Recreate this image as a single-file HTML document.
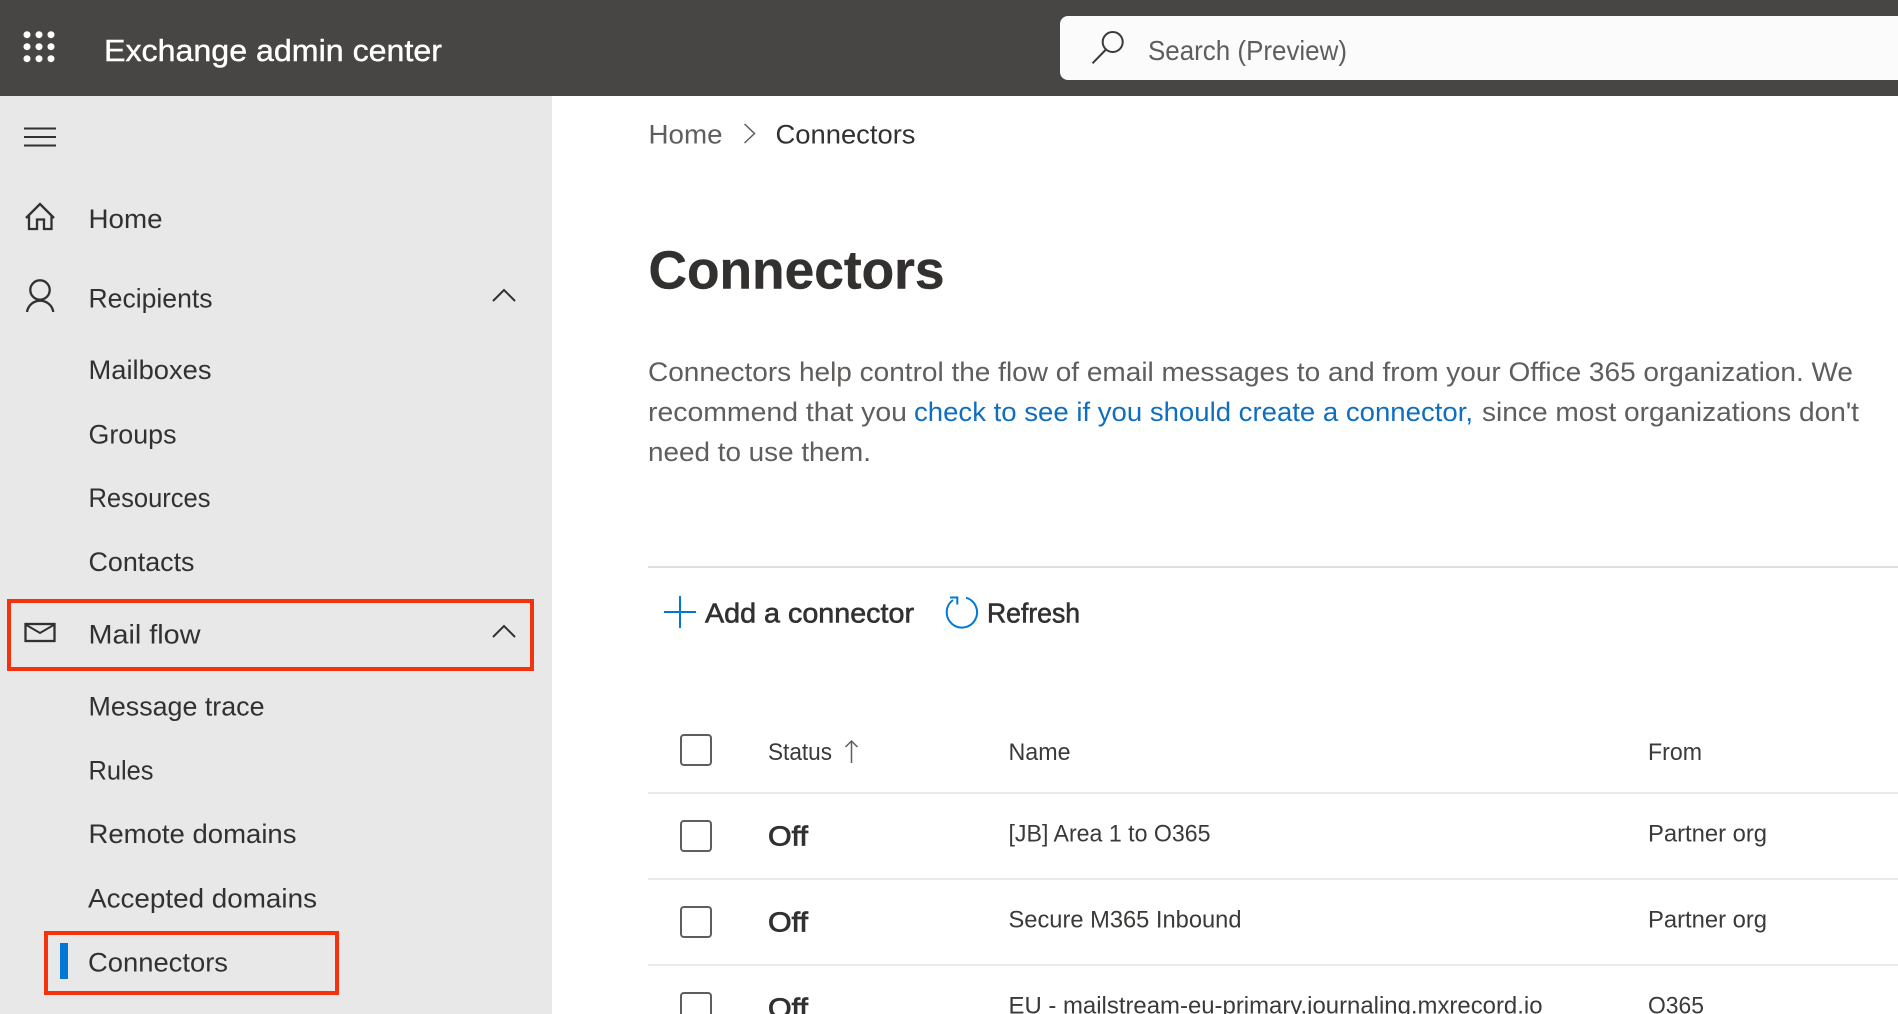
<!DOCTYPE html>
<html lang="en">
<head>
<meta charset="utf-8">
<title>Connectors - Exchange admin center</title>
<style>
html,body{margin:0;padding:0;width:1898px;height:1014px;overflow:hidden;background:#fff}
svg{display:block;filter:blur(.3px)}
text{font-family:"Liberation Sans",sans-serif;white-space:pre}
.nav{font-size:27px;fill:#323130}
.p{font-size:26.5px;fill:#605e5c}
.t{font-size:24px;fill:#3b3a39}
.s{font-size:28px;fill:#323130;stroke:#323130;stroke-width:.6px}
.off{font-size:28px;fill:#323130;stroke:#323130;stroke-width:.8px}
</style>
</head>
<body>
<svg width="1898" height="1014" viewBox="0 0 1898 1014" xmlns="http://www.w3.org/2000/svg">
  <rect width="1898" height="1014" fill="#fff"/>
  <!-- header -->
  <rect width="1898" height="96" fill="#484644"/>
  <g fill="#fff">
    <circle cx="27" cy="34.7" r="3.5"/><circle cx="39" cy="34.7" r="3.5"/><circle cx="51" cy="34.7" r="3.5"/>
    <circle cx="27" cy="46.7" r="3.5"/><circle cx="39" cy="46.7" r="3.5"/><circle cx="51" cy="46.7" r="3.5"/>
    <circle cx="27" cy="58.7" r="3.5"/><circle cx="39" cy="58.7" r="3.5"/><circle cx="51" cy="58.7" r="3.5"/>
  </g>
  <text x="104" y="61" font-size="31" fill="#fff" stroke="#fff" stroke-width=".4" textLength="338" lengthAdjust="spacingAndGlyphs">Exchange admin center</text>
  <path d="M1068 16H1898V80H1068a8 8 0 0 1-8-8V24a8 8 0 0 1 8-8z" fill="#fbfbfb"/>
  <circle cx="1112.700" cy="42" r="10" fill="none" stroke="#3b3a39" stroke-width="2"/>
  <path d="M1105.500 50L1092.500 63.300" fill="none" stroke="#3b3a39" stroke-width="2"/>
  <text x="1148" y="60" font-size="28" fill="#605e5c" textLength="199" lengthAdjust="spacingAndGlyphs">Search (Preview)</text>

  <!-- sidebar -->
  <rect y="96" width="552" height="918" fill="#e8e8e8"/>
  <path d="M24 128.500H56M24 137H56M24 145.500H56" stroke="#323130" stroke-width="2" fill="none"/>
  <path d="M26 218L40 204L54 218M29 215.500V229H37V219.500H44V229H51.500V215.500" fill="none" stroke="#323130" stroke-width="2.300"/>
  <text class="nav" x="88.500" y="228" textLength="74" lengthAdjust="spacingAndGlyphs">Home</text>
  <circle cx="40" cy="290" r="9.700" fill="none" stroke="#323130" stroke-width="2.300"/>
  <path d="M27 312A13.300 13.300 0 0 1 53.300 312" fill="none" stroke="#323130" stroke-width="2.300"/>
  <text class="nav" x="88.500" y="307.700" textLength="124" lengthAdjust="spacingAndGlyphs">Recipients</text>
  <path d="M493 301L504 290L515 301" fill="none" stroke="#323130" stroke-width="2"/>
  <text class="nav" x="88.500" y="379" textLength="123" lengthAdjust="spacingAndGlyphs">Mailboxes</text>
  <text class="nav" x="88.500" y="443.500" textLength="88" lengthAdjust="spacingAndGlyphs">Groups</text>
  <text class="nav" x="88.500" y="507" textLength="122" lengthAdjust="spacingAndGlyphs">Resources</text>
  <text class="nav" x="88.500" y="571" textLength="106" lengthAdjust="spacingAndGlyphs">Contacts</text>
  <rect x="25.500" y="624" width="29" height="17" fill="none" stroke="#323130" stroke-width="2.300"/>
  <path d="M25.500 624.500L40 633L54.500 624.500" fill="none" stroke="#323130" stroke-width="2"/>
  <text class="nav" x="88.500" y="643.300" textLength="112" lengthAdjust="spacingAndGlyphs">Mail flow</text>
  <path d="M493 637L504 626L515 637" fill="none" stroke="#323130" stroke-width="2"/>
  <text class="nav" x="88.500" y="715.700" textLength="176" lengthAdjust="spacingAndGlyphs">Message trace</text>
  <text class="nav" x="88.500" y="779.300" textLength="65" lengthAdjust="spacingAndGlyphs">Rules</text>
  <text class="nav" x="88.500" y="843" textLength="208" lengthAdjust="spacingAndGlyphs">Remote domains</text>
  <text class="nav" x="88" y="907.300" textLength="229" lengthAdjust="spacingAndGlyphs">Accepted domains</text>
  <rect x="60" y="943" width="8" height="36" fill="#0078d4"/>
  <text class="nav" x="88" y="971.500" textLength="140" lengthAdjust="spacingAndGlyphs">Connectors</text>
  <rect x="9" y="601" width="523" height="68" fill="none" stroke="#f2330d" stroke-width="4"/>
  <rect x="46" y="933" width="291" height="60" fill="none" stroke="#f2330d" stroke-width="4"/>

  <!-- breadcrumb -->
  <text x="648.500" y="143.500" font-size="27" fill="#605e5c" textLength="74" lengthAdjust="spacingAndGlyphs">Home</text>
  <path d="M744.500 124L754.500 133.500L744.500 143" fill="none" stroke="#605e5c" stroke-width="1.500"/>
  <text x="775.500" y="143.500" font-size="27" fill="#323130" textLength="140" lengthAdjust="spacingAndGlyphs">Connectors</text>

  <!-- heading -->
  <text x="648.500" y="288.500" font-size="54" font-weight="700" fill="#323130" stroke="#323130" stroke-width=".4" textLength="296" lengthAdjust="spacingAndGlyphs">Connectors</text>

  <!-- description -->
  <text class="p" x="648" y="381" textLength="1205" lengthAdjust="spacingAndGlyphs">Connectors help control the flow of email messages to and from your Office 365 organization. We</text>
  <text class="p" x="648" y="421" textLength="259" lengthAdjust="spacingAndGlyphs">recommend that you</text>
  <text class="p" x="914" y="421" style="fill:#106ebe" textLength="559" lengthAdjust="spacingAndGlyphs">check to see if you should create a connector,</text>
  <text class="p" x="1482" y="421" textLength="377" lengthAdjust="spacingAndGlyphs">since most organizations don't</text>
  <text class="p" x="648" y="461" textLength="223" lengthAdjust="spacingAndGlyphs">need to use them.</text>

  <rect x="648" y="566" width="1250" height="2" fill="#e1dfdd"/>

  <!-- toolbar -->
  <path d="M664 612H696M680 596V628" stroke="#0078d4" stroke-width="2" fill="none"/>
  <text class="s" x="705" y="622.700" textLength="209" lengthAdjust="spacingAndGlyphs">Add a connector</text>
  <path d="M966 597.700A15.200 15.200 0 1 1 953 600" fill="none" stroke="#0078d4" stroke-width="2"/>
  <path d="M950 597.500H957.300V604.500" fill="none" stroke="#0078d4" stroke-width="2"/>
  <text class="s" x="987" y="622.700" textLength="93" lengthAdjust="spacingAndGlyphs">Refresh</text>

  <!-- table header -->
  <rect x="681" y="735" width="30" height="30" rx="3" fill="#fff" stroke="#605e5c" stroke-width="2"/>
  <text class="t" x="768" y="760" textLength="64" lengthAdjust="spacingAndGlyphs">Status</text>
  <path d="M851.500 741V763M845.500 747L851.500 741L857.500 747" fill="none" stroke="#605e5c" stroke-width="1.500"/>
  <text class="t" x="1008.500" y="760" textLength="62" lengthAdjust="spacingAndGlyphs">Name</text>
  <text class="t" x="1648" y="760" textLength="54" lengthAdjust="spacingAndGlyphs">From</text>
  <rect x="648" y="792" width="1250" height="2" fill="#edebe9"/>

  <!-- row 1 -->
  <rect x="681" y="821" width="30" height="30" rx="3" fill="#fff" stroke="#605e5c" stroke-width="2"/>
  <text class="off" x="768" y="845.700" textLength="40" lengthAdjust="spacingAndGlyphs">Off</text>
  <text class="t" x="1008.500" y="841.700" textLength="202" lengthAdjust="spacingAndGlyphs">[JB] Area 1 to O365</text>
  <text class="t" x="1648" y="841.700" textLength="119" lengthAdjust="spacingAndGlyphs">Partner org</text>
  <rect x="648" y="878" width="1250" height="2" fill="#edebe9"/>

  <!-- row 2 -->
  <rect x="681" y="907" width="30" height="30" rx="3" fill="#fff" stroke="#605e5c" stroke-width="2"/>
  <text class="off" x="768" y="931.700" textLength="40" lengthAdjust="spacingAndGlyphs">Off</text>
  <text class="t" x="1008.500" y="927.700" textLength="233" lengthAdjust="spacingAndGlyphs">Secure M365 Inbound</text>
  <text class="t" x="1648" y="927.700" textLength="119" lengthAdjust="spacingAndGlyphs">Partner org</text>
  <rect x="648" y="964" width="1250" height="2" fill="#edebe9"/>

  <!-- row 3 -->
  <rect x="681" y="993" width="30" height="30" rx="3" fill="#fff" stroke="#605e5c" stroke-width="2"/>
  <text class="off" x="768" y="1017.700" textLength="40" lengthAdjust="spacingAndGlyphs">Off</text>
  <text class="t" x="1008.500" y="1013.700" textLength="534" lengthAdjust="spacingAndGlyphs">EU - mailstream-eu-primary.journaling.mxrecord.io</text>
  <text class="t" x="1648" y="1013.700" textLength="56" lengthAdjust="spacingAndGlyphs">O365</text>
</svg>
</body>
</html>
